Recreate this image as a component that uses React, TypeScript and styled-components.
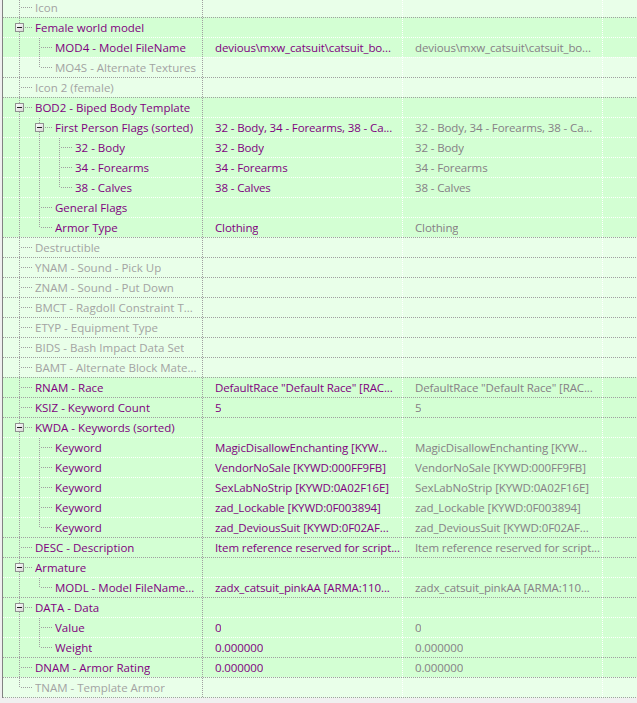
import React from 'react';
import styled, { createGlobalStyle } from 'styled-components';

const Global = createGlobalStyle`
  html, body {
    margin: 0;
    padding: 0;
    background: #f0f0f0;
    overflow: hidden;
  }
  body {
    font-family: "Segoe UI", "Open Sans", "Noto Sans", sans-serif;
    font-size: 11.5px;
  }
`;

const TREE_LINE = '#a0a0a0';
const GRID_GRAY = '#a0a0a0';
const GRID_WHITE = '#ffffff';
const BG_FILLED = '#d3ffd3';
const BG_EMPTY = '#e9ffe9';
const INK_MASTER = '#800080';
const INK_OVERRIDE = '#868086';
const INK_EMPTY = '#a3a3a3';

type Item = {
  depth: number;
  name: string;
  values?: [string, string];
  open?: boolean;
  empty?: boolean;
};

const same = (v: string): [string, string] => [v, v];

const items: Item[] = [
  { depth: 0, name: 'Icon', empty: true },
  { depth: 0, name: 'Female world model', open: true },
  { depth: 1, name: 'MOD4 - Model FileName', values: same('devious\\mxw_catsuit\\catsuit_bo...') },
  { depth: 1, name: 'MO4S - Alternate Textures', empty: true },
  { depth: 0, name: 'Icon 2 (female)', empty: true },
  { depth: 0, name: 'BOD2 - Biped Body Template', open: true },
  { depth: 1, name: 'First Person Flags (sorted)', open: true, values: same('32 - Body, 34 - Forearms, 38 - Ca...') },
  { depth: 2, name: '32 - Body', values: same('32 - Body') },
  { depth: 2, name: '34 - Forearms', values: same('34 - Forearms') },
  { depth: 2, name: '38 - Calves', values: same('38 - Calves') },
  { depth: 1, name: 'General Flags' },
  { depth: 1, name: 'Armor Type', values: same('Clothing') },
  { depth: 0, name: 'Destructible', empty: true },
  { depth: 0, name: 'YNAM - Sound - Pick Up', empty: true },
  { depth: 0, name: 'ZNAM - Sound - Put Down', empty: true },
  { depth: 0, name: 'BMCT - Ragdoll Constraint T...', empty: true },
  { depth: 0, name: 'ETYP - Equipment Type', empty: true },
  { depth: 0, name: 'BIDS - Bash Impact Data Set', empty: true },
  { depth: 0, name: 'BAMT - Alternate Block Mate...', empty: true },
  { depth: 0, name: 'RNAM - Race', values: same('DefaultRace "Default Race" [RAC...') },
  { depth: 0, name: 'KSIZ - Keyword Count', values: same('5') },
  { depth: 0, name: 'KWDA - Keywords (sorted)', open: true },
  { depth: 1, name: 'Keyword', values: same('MagicDisallowEnchanting [KYW...') },
  { depth: 1, name: 'Keyword', values: same('VendorNoSale [KYWD:000FF9FB]') },
  { depth: 1, name: 'Keyword', values: same('SexLabNoStrip [KYWD:0A02F16E]') },
  { depth: 1, name: 'Keyword', values: same('zad_Lockable [KYWD:0F003894]') },
  { depth: 1, name: 'Keyword', values: same('zad_DeviousSuit [KYWD:0F02AF...') },
  { depth: 0, name: 'DESC - Description', values: same('Item reference reserved for script...') },
  { depth: 0, name: 'Armature', open: true },
  { depth: 1, name: 'MODL - Model FileName...', values: same('zadx_catsuit_pinkAA [ARMA:110...') },
  { depth: 0, name: 'DATA - Data', open: true },
  { depth: 1, name: 'Value', values: same('0') },
  { depth: 1, name: 'Weight', values: same('0.000000') },
  { depth: 0, name: 'DNAM - Armor Rating', values: same('0.000000') },
  { depth: 0, name: 'TNAM - Template Armor', empty: true },
];

// For each level 0..depth, whether a later sibling at that level still follows.
function continuation(index: number): boolean[] {
  const depth = items[index].depth;
  const result: boolean[] = [];
  for (let level = 0; level <= depth; level++) {
    let goesOn = false;
    for (let j = index + 1; j < items.length; j++) {
      const dj = items[j].depth;
      if (dj < level) break;
      if (dj === level) {
        goesOn = true;
        break;
      }
    }
    result.push(goesOn);
  }
  return result;
}

const dotsDown = `repeating-linear-gradient(to bottom, ${TREE_LINE} 0 1px, transparent 1px 2px)`;
const dotsAcross = `repeating-linear-gradient(to right, ${TREE_LINE} 0 1px, transparent 1px 2px)`;

const Panel = styled.div`
  height: 698px;
  margin-left: 2px;
  border-left: 1px solid #828282;
  overflow: hidden;
`;

const List = styled.div`
  margin-top: -3px;
  display: flex;
  flex-direction: column;
`;

const Row = styled.div<{ $bg: string; $line: string }>`
  display: flex;
  height: 20px;
  box-sizing: border-box;
  padding-top: 1px;
  background:
    linear-gradient(90deg, ${(p) => p.$line} 50%, transparent 50%) 0 0 / 2px 1px repeat-x,
    ${(p) => p.$bg};
`;

const ListEnd = styled.div`
  height: 1px;
  background:
    linear-gradient(90deg, ${GRID_GRAY} 50%, transparent 50%) 0 0 / 2px 1px repeat-x,
    ${BG_EMPTY};
`;

const Cell = styled.div<{ $sep: string }>`
  flex: none;
  width: 200px;
  box-sizing: border-box;
  display: flex;
  align-items: stretch;
  min-width: 0;
  background: linear-gradient(to bottom, ${(p) => p.$sep} 50%, transparent 50%) right 0 / 1px 2px repeat-y;
`;

const NameCell = styled(Cell)`
  padding-left: 6px;
`;

const ValueCell = styled(Cell)`
  padding-left: 12px;
  padding-right: 2px;
`;

const Filler = styled.div`
  flex: 1;
`;

// One indentation step of the tree: a vertical guide line and, on the
// node's own level, the elbow towards its label.
const Guide = styled.span<{ $stem: 'none' | 'full' | 'half'; $elbow: boolean; $boxed: boolean }>`
  flex: none;
  width: ${(p) => (p.$elbow ? 26 : 20)}px;
  display: flex;
  align-items: center;
  padding-left: 6px;
  box-sizing: border-box;
  background-repeat: no-repeat;
  background-image: ${(p) =>
    [p.$stem !== 'none' ? dotsDown : null, p.$elbow ? dotsAcross : null].filter(Boolean).join(', ') ||
    'none'};
  background-position: ${(p) =>
    [p.$stem !== 'none' ? '10px 0' : null, p.$elbow ? `${p.$boxed ? 16 : 12}px 9px` : null]
      .filter(Boolean)
      .join(', ') || '0 0'};
  background-size: ${(p) =>
    [
      p.$stem === 'full' ? '1px 100%' : p.$stem === 'half' ? '1px 10px' : null,
      p.$elbow ? `${p.$boxed ? 7 : 11}px 1px` : null,
    ]
      .filter(Boolean)
      .join(', ') || 'auto'};
`;

const Label = styled.span<{ $ink: string }>`
  color: ${(p) => p.$ink};
  line-height: 19px;
  white-space: nowrap;
  overflow: hidden;
`;

const Value = styled.span<{ $ink: string }>`
  color: ${(p) => p.$ink};
  line-height: 19px;
  letter-spacing: -0.12px;
  white-space: nowrap;
  overflow: hidden;
`;

const CollapseBox = () => (
  <svg width="9" height="9" viewBox="0 0 9 9" style={{ display: 'block' }}>
    <defs>
      <linearGradient id="collapse-fill" x1="0" y1="0" x2="1" y2="1">
        <stop offset="0" stopColor="#ffffff" />
        <stop offset="1" stopColor="#d6d6d6" />
      </linearGradient>
    </defs>
    <rect x="0.5" y="0.5" width="8" height="8" fill="url(#collapse-fill)" stroke="#919191" />
    <rect x="2" y="4" width="5" height="1" fill="#1e1e1e" />
  </svg>
);

const TreeRow = ({ item, index }: { item: Item; index: number }) => {
  const goesOn = continuation(index);
  const bg = item.empty ? BG_EMPTY : BG_FILLED;
  const line = item.depth === 0 ? GRID_GRAY : GRID_WHITE;
  const nameInk = item.empty ? INK_EMPTY : INK_MASTER;
  const guides = [];
  for (let level = 0; level <= item.depth; level++) {
    const own = level === item.depth;
    const stem: 'none' | 'full' | 'half' = goesOn[level] ? 'full' : own ? 'half' : 'none';
    guides.push(
      <Guide key={level} $stem={stem} $elbow={own} $boxed={own && !!item.open}>
        {own && item.open ? <CollapseBox /> : null}
      </Guide>
    );
  }
  return (
    <Row $bg={bg} $line={line}>
      <NameCell $sep={GRID_GRAY}>
        {guides}
        <Label $ink={nameInk}>{item.name}</Label>
      </NameCell>
      <ValueCell $sep={GRID_WHITE}>
        <Value $ink={INK_MASTER}>{item.values?.[0] ?? ''}</Value>
      </ValueCell>
      <ValueCell $sep={GRID_WHITE}>
        <Value $ink={INK_OVERRIDE}>{item.values?.[1] ?? ''}</Value>
      </ValueCell>
      <Filler />
    </Row>
  );
};

export default function App() {
  return (
    <>
      <Global />
      <Panel>
        <List>
          {items.map((item, i) => (
            <TreeRow key={i} item={item} index={i} />
          ))}
          <ListEnd />
        </List>
      </Panel>
    </>
  );
}
